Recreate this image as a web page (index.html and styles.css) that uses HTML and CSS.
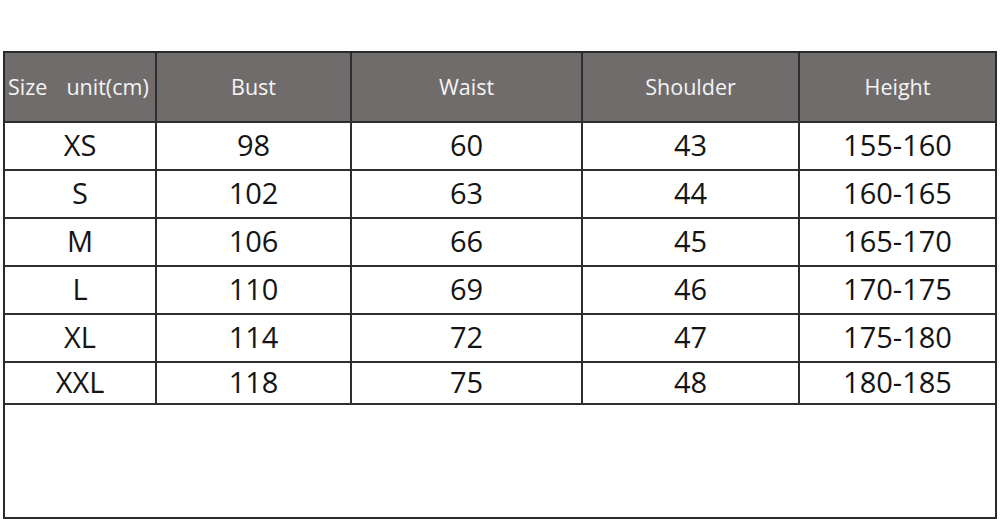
FILE: index.html
```html
<!DOCTYPE html>
<html>
<head>
<meta charset="utf-8">
<link rel="stylesheet" href="styles.css">
</head>
<body>
<div class="sheet">
  <div class="grid">
    <div class="cell head first"><span>Size</span><span>unit(cm)</span></div>
    <div class="cell head">Bust</div>
    <div class="cell head">Waist</div>
    <div class="cell head">Shoulder</div>
    <div class="cell head last">Height</div>

    <div class="cell">XS</div><div class="cell">98</div><div class="cell">60</div><div class="cell">43</div><div class="cell last">155-160</div>
    <div class="cell">S</div><div class="cell">102</div><div class="cell">63</div><div class="cell">44</div><div class="cell last">160-165</div>
    <div class="cell">M</div><div class="cell">106</div><div class="cell">66</div><div class="cell">45</div><div class="cell last">165-170</div>
    <div class="cell">L</div><div class="cell">110</div><div class="cell">69</div><div class="cell">46</div><div class="cell last">170-175</div>
    <div class="cell">XL</div><div class="cell">114</div><div class="cell">72</div><div class="cell">47</div><div class="cell last">175-180</div>
    <div class="cell">XXL</div><div class="cell">118</div><div class="cell">75</div><div class="cell">48</div><div class="cell last">180-185</div>
  </div>
</div>
</body>
</html>
```

FILE: styles.css
```css
html, body {
  margin: 0;
  padding: 0;
  background: #ffffff;
}

body {
  font-family: "Open Sans", "Noto Sans", sans-serif;
  color: #141414;
}

.sheet {
  margin: 51px 0 0 3px;
  width: 994px;
  height: 468px;
  border: 2px solid #2a2a2a;
  box-sizing: border-box;
  background: #fff;
}

.grid {
  display: grid;
  grid-template-columns: 152px 195px 231px 217px 1fr;
  grid-template-rows: 70px repeat(5, 48px) 42px;
}

.cell {
  box-sizing: border-box;
  border-right: 2px solid #2e2e2e;
  border-bottom: 2px solid #2e2e2e;
  display: flex;
  align-items: center;
  justify-content: center;
  font-size: 29px;
  line-height: 1;
  padding-bottom: 3px;
}

.cell.last {
  border-right: none;
}

.head {
  background: #706c6c;
  color: #f4f4f4;
  font-size: 21.5px;
  padding-bottom: 1px;
}

.head.first {
  justify-content: flex-start;
  padding-left: 3px;
  gap: 19px;
}
```
